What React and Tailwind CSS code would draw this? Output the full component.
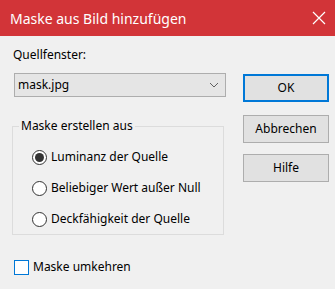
import React from 'react';

function Radio({ checked, label }) {
  return (
    <div className="flex items-center h-[16px]">
      <span className="w-[15px] h-[15px] rounded-full border border-[#333] bg-white flex items-center justify-center">
        {checked && <span className="w-[9px] h-[9px] rounded-full bg-[#333]" />}
      </span>
      <span className="ml-[4px]">{label}</span>
    </div>
  );
}

function Button({ children, primary, className = '' }) {
  return (
    <button
      className={`w-[86px] h-[28px] bg-[#e1e1e1] text-black text-[12px] ${primary ? 'border-2 border-[#0078d7]' : 'border border-[#adadad]'} ${className}`}
    >
      {children}
    </button>
  );
}

export default function App() {
  return (
    <div className="w-[335px] h-[289px] bg-[#f0f0f0] flex flex-col text-black text-[12px] font-['Segoe_UI','Noto_Sans',sans-serif]">
      <div className="h-[36px] bg-[#d23438] flex items-center justify-between pl-[10px] pr-[8px] text-white">
        <span className="text-[14px]">Maske aus Bild hinzufügen</span>
        <svg width="14" height="14" viewBox="0 0 14 14" className="mr-[1px]">
          <path d="M1 1 L13 13 M13 1 L1 13" stroke="white" strokeWidth="1.2" />
        </svg>
      </div>

      <div className="flex flex-1">
        <div className="flex flex-col pl-[12px] w-[231px]">
          <div className="mt-[11px] h-[16px] leading-[16px] pl-[1px]">Quellfenster:</div>
          <div className="mt-[10px] ml-[2px] w-[212px] h-[24px] bg-[#e5e5e5] border border-[#adadad] flex items-center justify-between pl-[3px] pr-[6px]">
            <span>mask.jpg</span>
            <svg width="10" height="6" viewBox="0 0 10 6">
              <path d="M1 1 L5 5 L9 1" stroke="#606060" strokeWidth="1" fill="none" />
            </svg>
          </div>

          <fieldset className="mt-[21px] w-[212px] h-[117px] border border-[#dcdcdc] flex flex-col">
            <legend className="ml-[6px] px-[2px] leading-[16px]">Maske erstellen aus</legend>
            <div className="flex flex-col gap-[15px] mt-[15px] pl-[19px]">
              <Radio checked label="Luminanz der Quelle" />
              <Radio label="Beliebiger Wert außer Null" />
              <Radio label="Deckfähigkeit der Quelle" />
            </div>
          </fieldset>

          <div className="mt-[23px] ml-[2px] flex items-center">
            <span className="w-[15px] h-[15px] border border-[#0078d7] bg-white" />
            <span className="ml-[4px]">Maske umkehren</span>
          </div>
        </div>

        <div className="flex flex-col pl-[12px] pt-[38px]">
          <Button primary>OK</Button>
          <Button className="mt-[13px]">Abbrechen</Button>
          <Button className="mt-[11px]">Hilfe</Button>
        </div>
      </div>
    </div>
  );
}
